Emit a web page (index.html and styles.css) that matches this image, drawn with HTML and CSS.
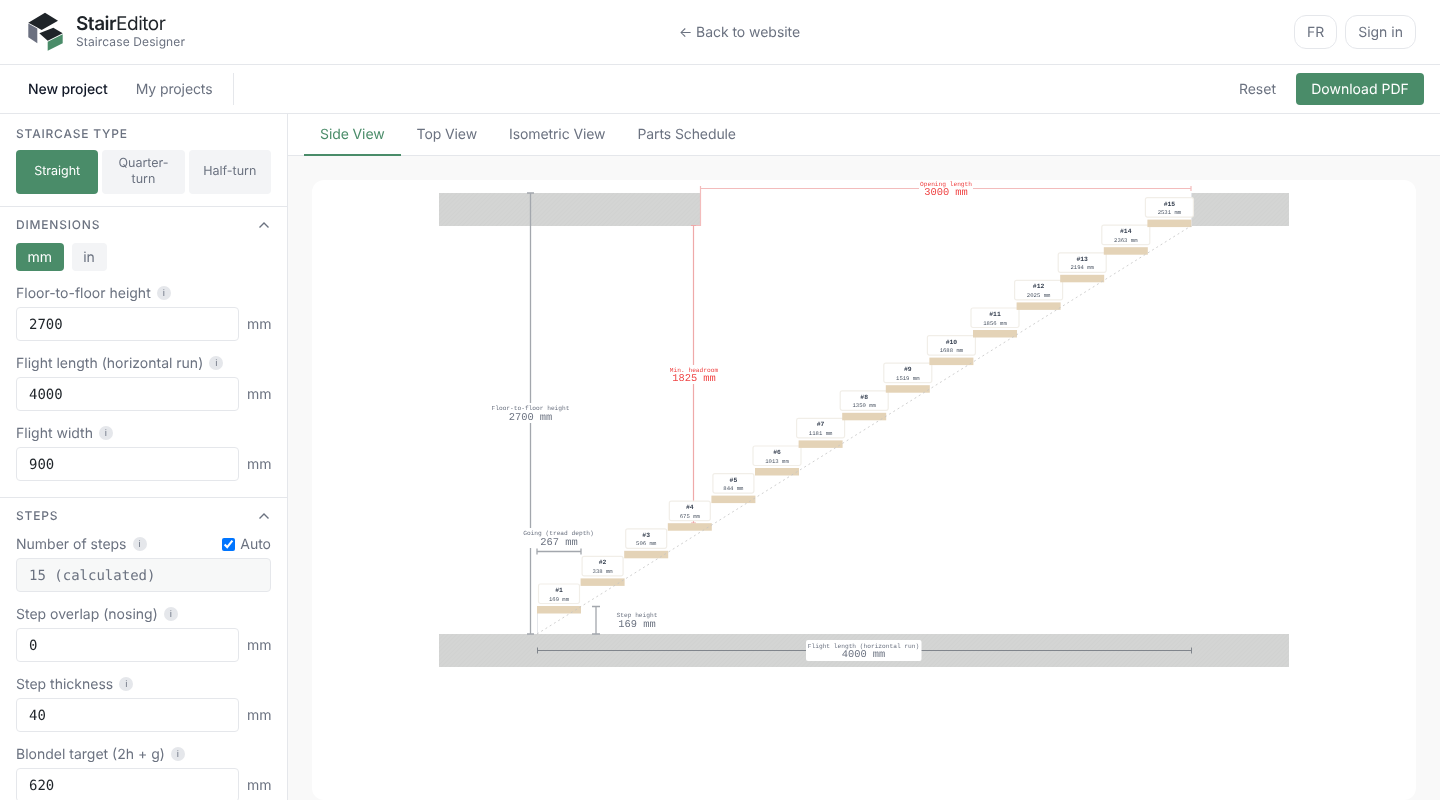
FILE: index.html
```html
<!DOCTYPE html>
<html lang="en">
<head>
    <meta charset="UTF-8">
    <meta name="viewport" content="width=device-width, initial-scale=1.0">
    <title>StairEditor - Staircase Designer</title>
    <link rel="stylesheet" href="styles.css">
</head>
<body>

    <header class="topbar">
        <div class="brand">
            <svg class="brand-logo" viewBox="0 0 40 40" width="40" height="40">
                <polygon points="4.3,10.7 21,0.7 34,8.7 17.7,18 13.3,15.5" fill="#1f2429"/>
                <polygon points="4.3,11.5 13.3,16.5 13.3,31.3 4.3,25.3" fill="#6b7080"/>
                <polygon points="15.3,21.3 29.3,15.7 38.7,21.3 23.7,28.7" fill="#1f2429"/>
                <polygon points="23.7,29.7 38.7,22.3 38.7,31.3 23.7,38.7" fill="#4a8c69"/>
            </svg>
            <div>
                <div class="brand-name"><b>Stair</b>Editor</div>
                <div class="brand-sub">Staircase Designer</div>
            </div>
        </div>
        <a class="back-link">← Back to website</a>
        <div class="topbar-actions">
            <button class="pill-btn">FR</button>
            <button class="pill-btn">Sign in</button>
        </div>
    </header>

    <nav class="projectbar">
        <div class="project-links">
            <a class="project-link active">New project</a>
            <a class="project-link">My projects</a>
        </div>
        <div class="project-actions">
            <a class="reset-link">Reset</a>
            <button class="primary-btn">Download PDF</button>
        </div>
    </nav>

    <div class="workspace">
        <aside class="sidebar">
            <section class="panel panel-type">
                <h3 class="panel-title">Staircase type</h3>
                <div class="type-grid">
                    <button class="type-btn active">Straight</button>
                    <button class="type-btn">Quarter-turn</button>
                    <button class="type-btn">Half-turn</button>
                </div>
            </section>

            <section class="panel">
                <div class="panel-head">
                    <h3 class="panel-title">Dimensions</h3>
                    <svg class="chevron" viewBox="0 0 12 8" width="12" height="8"><path d="M1.5 6.5 6 2l4.5 4.5"/></svg>
                </div>
                <div class="unit-toggle">
                    <button class="unit-btn active">mm</button>
                    <button class="unit-btn">in</button>
                </div>
                <div class="field">
                    <label class="field-label">Floor-to-floor height <span class="info">i</span></label>
                    <div class="field-row"><input type="text" value="2700"><span class="unit">mm</span></div>
                </div>
                <div class="field">
                    <label class="field-label">Flight length (horizontal run) <span class="info">i</span></label>
                    <div class="field-row"><input type="text" value="4000"><span class="unit">mm</span></div>
                </div>
                <div class="field">
                    <label class="field-label">Flight width <span class="info">i</span></label>
                    <div class="field-row"><input type="text" value="900"><span class="unit">mm</span></div>
                </div>
            </section>

            <section class="panel">
                <div class="panel-head">
                    <h3 class="panel-title">Steps</h3>
                    <svg class="chevron" viewBox="0 0 12 8" width="12" height="8"><path d="M1.5 6.5 6 2l4.5 4.5"/></svg>
                </div>
                <div class="field">
                    <div class="label-row">
                        <label class="field-label">Number of steps <span class="info">i</span></label>
                        <label class="auto-check"><input type="checkbox" checked> Auto</label>
                    </div>
                    <div class="field-row"><input type="text" value="15 (calculated)" disabled></div>
                </div>
                <div class="field">
                    <label class="field-label">Step overlap (nosing) <span class="info">i</span></label>
                    <div class="field-row"><input type="text" value="0"><span class="unit">mm</span></div>
                </div>
                <div class="field">
                    <label class="field-label">Step thickness <span class="info">i</span></label>
                    <div class="field-row"><input type="text" value="40"><span class="unit">mm</span></div>
                </div>
                <div class="field">
                    <label class="field-label">Blondel target (2h + g) <span class="info">i</span></label>
                    <div class="field-row"><input type="text" value="620"><span class="unit">mm</span></div>
                </div>
            </section>
        </aside>

        <main class="viewer">
            <div class="tabs">
                <a class="tab active">Side View</a>
                <a class="tab">Top View</a>
                <a class="tab">Isometric View</a>
                <a class="tab">Parts Schedule</a>
            </div>
            <div class="canvas-wrap">
                <div class="canvas-card">
                    <!-- viewBox uses the same numbers as the page so the drawing is easy to check -->
                    <svg class="drawing" viewBox="312 180 1104 620" width="1104" height="620">
                        <defs>
                            <pattern id="hatch" width="3" height="3" patternUnits="userSpaceOnUse" patternTransform="rotate(45)">
                                <rect width="3" height="3" fill="#d4d5d4"/>
                                <line x1="0" y1="0" x2="0" y2="3" stroke="#cfd0cf" stroke-width="1"/>
                            </pattern>
                        </defs>

                        <rect class="slab" x="439" y="193" width="261.5" height="33"/>
                        <rect class="slab" x="1191" y="193" width="98" height="33"/>
                        <rect class="slab" x="439" y="634" width="850" height="33"/>

                        <line class="guide" x1="537.5" y1="613" x2="537.5" y2="634"/>
                        <line class="guide" x1="1191.5" y1="193" x2="1191.5" y2="227"/>

                        <!-- headroom line goes under the step boxes -->
                        <path class="dim-red" d="M693.5 226V523M691 225.5h5M691 523h5"/>

                        <!-- steps -->
                        <g transform="translate(537 606)"><rect class="tread" width="44" height="7.5"/><rect class="step-box" x="1.5" y="-22" width="41" height="19.5" rx="2"/><text class="step-num" x="22" y="-14">#1</text><text class="step-mm" x="22" y="-5.5">169 mm</text></g>
                        <g transform="translate(580.6 578.4)"><rect class="tread" width="44" height="7.5"/><rect class="step-box" x="1.5" y="-22" width="41" height="19.5" rx="2"/><text class="step-num" x="22" y="-14">#2</text><text class="step-mm" x="22" y="-5.5">338 mm</text></g>
                        <g transform="translate(624.2 550.8)"><rect class="tread" width="44" height="7.5"/><rect class="step-box" x="1.5" y="-22" width="41" height="19.5" rx="2"/><text class="step-num" x="22" y="-14">#3</text><text class="step-mm" x="22" y="-5.5">506 mm</text></g>
                        <g transform="translate(667.8 523.2)"><rect class="tread" width="44" height="7.5"/><rect class="step-box" x="1.5" y="-22" width="41" height="19.5" rx="2"/><text class="step-num" x="22" y="-14">#4</text><text class="step-mm" x="22" y="-5.5">675 mm</text></g>
                        <g transform="translate(711.4 495.6)"><rect class="tread" width="44" height="7.5"/><rect class="step-box" x="1.5" y="-22" width="41" height="19.5" rx="2"/><text class="step-num" x="22" y="-14">#5</text><text class="step-mm" x="22" y="-5.5">844 mm</text></g>
                        <g transform="translate(755 468)"><rect class="tread" width="44" height="7.5"/><rect class="step-box" x="-2" y="-22" width="48" height="19.5" rx="2"/><text class="step-num" x="22" y="-14">#6</text><text class="step-mm" x="22" y="-5.5">1013 mm</text></g>
                        <g transform="translate(798.6 440.4)"><rect class="tread" width="44" height="7.5"/><rect class="step-box" x="-2" y="-22" width="48" height="19.5" rx="2"/><text class="step-num" x="22" y="-14">#7</text><text class="step-mm" x="22" y="-5.5">1181 mm</text></g>
                        <g transform="translate(842.2 412.8)"><rect class="tread" width="44" height="7.5"/><rect class="step-box" x="-2" y="-22" width="48" height="19.5" rx="2"/><text class="step-num" x="22" y="-14">#8</text><text class="step-mm" x="22" y="-5.5">1350 mm</text></g>
                        <g transform="translate(885.8 385.2)"><rect class="tread" width="44" height="7.5"/><rect class="step-box" x="-2" y="-22" width="48" height="19.5" rx="2"/><text class="step-num" x="22" y="-14">#9</text><text class="step-mm" x="22" y="-5.5">1519 mm</text></g>
                        <g transform="translate(929.4 357.6)"><rect class="tread" width="44" height="7.5"/><rect class="step-box" x="-2" y="-22" width="48" height="19.5" rx="2"/><text class="step-num" x="22" y="-14">#10</text><text class="step-mm" x="22" y="-5.5">1688 mm</text></g>
                        <g transform="translate(973 330)"><rect class="tread" width="44" height="7.5"/><rect class="step-box" x="-2" y="-22" width="48" height="19.5" rx="2"/><text class="step-num" x="22" y="-14">#11</text><text class="step-mm" x="22" y="-5.5">1856 mm</text></g>
                        <g transform="translate(1016.6 302.4)"><rect class="tread" width="44" height="7.5"/><rect class="step-box" x="-2" y="-22" width="48" height="19.5" rx="2"/><text class="step-num" x="22" y="-14">#12</text><text class="step-mm" x="22" y="-5.5">2025 mm</text></g>
                        <g transform="translate(1060.2 274.8)"><rect class="tread" width="44" height="7.5"/><rect class="step-box" x="-2" y="-22" width="48" height="19.5" rx="2"/><text class="step-num" x="22" y="-14">#13</text><text class="step-mm" x="22" y="-5.5">2194 mm</text></g>
                        <g transform="translate(1103.8 247.2)"><rect class="tread" width="44" height="7.5"/><rect class="step-box" x="-2" y="-22" width="48" height="19.5" rx="2"/><text class="step-num" x="22" y="-14">#14</text><text class="step-mm" x="22" y="-5.5">2363 mm</text></g>
                        <g transform="translate(1147.4 219.6)"><rect class="tread" width="44" height="7.5"/><rect class="step-box" x="-2" y="-22" width="48" height="19.5" rx="2"/><text class="step-num" x="22" y="-14">#15</text><text class="step-mm" x="22" y="-5.5">2531 mm</text></g>

                        <line class="pitch" x1="537" y1="634" x2="1191" y2="226"/>

                        <!-- floor height -->
                        <path class="dim" d="M530.5 193V634M527 193h7M527 634h7"/>
                        <rect class="dim-bg" x="488" y="403" width="85" height="20"/>
                        <text class="dim-label" x="530.5" y="410">Floor-to-floor height</text>
                        <text class="dim-value" x="530.5" y="419.5">2700 mm</text>

                        <!-- going -->
                        <rect class="dim-bg" x="522" y="528" width="74" height="20"/>
                        <text class="dim-label" x="558.5" y="535">Going (tread depth)</text>
                        <text class="dim-value" x="559" y="544.5">267 mm</text>
                        <path class="dim" d="M537 551.5H581M537 548.5v6M581 548.5v6"/>

                        <!-- step height -->
                        <path class="dim" d="M596 606.5V634M592 606.5h8M592 634h8"/>
                        <text class="dim-label" x="637" y="617">Step height</text>
                        <text class="dim-value" x="637" y="626.5">169 mm</text>

                        <!-- flight length -->
                        <path class="dim dim-dark" d="M537 650.5H1191M537.5 647.5v6M1191.5 647.5v6"/>
                        <rect class="dim-bg" x="806" y="640" width="115.5" height="21" rx="2"/>
                        <text class="dim-label" x="863.5" y="647.5">Flight length (horizontal run)</text>
                        <text class="dim-value" x="863.5" y="657">4000 mm</text>

                        <!-- opening -->
                        <path class="dim-red dim-pale" d="M700.5 188.5H1191M700.5 186v5M1191 186v5M700.5 188.5V225.5H696"/>
                        <rect class="dim-bg" x="919" y="181" width="54" height="17"/>
                        <text class="dim-label red" x="946" y="185.5">Opening length</text>
                        <text class="dim-value red" x="946" y="195">3000 mm</text>

                        <!-- headroom label -->
                        <rect class="dim-bg" x="668" y="365" width="52" height="19"/>
                        <text class="dim-label red" x="694" y="371.5">Min. headroom</text>
                        <text class="dim-value red" x="694" y="380.5">1825 mm</text>
                    </svg>
                </div>
            </div>
        </main>
    </div>

</body>
</html>
```

FILE: styles.css
```css
* {
    box-sizing: border-box;
}
html, body {
    height: 100%;
}
body {
    margin: 0;
    height: 100vh;
    overflow: hidden;
    display: flex;
    flex-direction: column;
    font-family: Inter, "Liberation Sans", sans-serif;
    font-size: 14px;
    color: #6b7280;
    background: #fff;
    text-rendering: geometricPrecision;
}
body > * {
    will-change: transform;
}
button {
    font-family: inherit;
    cursor: pointer;
    text-rendering: geometricPrecision;
}

/* top bar */
.topbar {
    flex: none;
    height: 65px;
    padding: 0 24px;
    display: flex;
    align-items: center;
    justify-content: space-between;
    border-bottom: 1px solid #e5e7eb;
}
.brand {
    display: flex;
    align-items: center;
    gap: 12px;
}
.brand-logo {
    display: block;
}
.brand-name {
    font-size: 19px;
    line-height: 22px;
    letter-spacing: -0.5px;
    color: #1f2429;
}
.brand-name b {
    font-weight: 600;
}
.brand-sub {
    font-size: 12px;
    line-height: 14px;
    letter-spacing: 0.12px;
    color: #6b7280;
    margin-bottom: 2px;
}
.back-link {
    color: #6b7280;
    letter-spacing: -0.05px;
}
.topbar-actions {
    display: flex;
    gap: 8px;
}
.pill-btn {
    height: 34px;
    padding: 0 12px;
    font-size: 14px;
    color: #6b7280;
    background: #fff;
    border: 1px solid #e5e7eb;
    border-radius: 12px;
}

/* project bar */
.projectbar {
    flex: none;
    height: 49px;
    padding: 0 16px 0 28px;
    display: flex;
    align-items: center;
    justify-content: space-between;
    border-bottom: 1px solid #e5e7eb;
}
.project-links {
    height: 32px;
    padding-right: 20px;
    display: flex;
    align-items: center;
    gap: 28px;
    letter-spacing: -0.1px;
    border-right: 1px solid #e5e7eb;
}
.project-link.active {
    color: #111827;
    font-weight: 500;
}
.project-actions {
    display: flex;
    align-items: center;
    gap: 20px;
}
.primary-btn {
    width: 128px;
    height: 32px;
    font-size: 14px;
    color: #fff;
    background: #4a8c69;
    border: none;
    border-radius: 4px;
}

/* layout */
.workspace {
    flex: 1;
    min-height: 0;
    display: flex;
}
.sidebar {
    flex: none;
    width: 288px;
    overflow: hidden;
    border-right: 1px solid #e5e7eb;
}
.panel {
    padding: 0 16px 16px;
    border-bottom: 1px solid #e5e7eb;
}
.panel-type {
    padding: 13px 16px 12px;
}
.panel-title {
    margin: 0;
    font-size: 12px;
    line-height: 14px;
    font-weight: 500;
    letter-spacing: 0.8px;
    text-transform: uppercase;
    color: #6b7280;
}
.panel-head {
    height: 36px;
    display: flex;
    align-items: center;
    justify-content: space-between;
}
.chevron {
    fill: none;
    stroke: #6b7280;
    stroke-width: 1.4;
    margin-right: 1px;
}
.type-grid {
    margin-top: 9px;
    display: grid;
    grid-template-columns: repeat(3, 1fr);
    gap: 4px;
}
.type-btn {
    height: 44px;
    padding: 0 8px;
    font-size: 12.5px;
    line-height: 16px;
    color: #6b7280;
    background: #f3f4f6;
    border: none;
    border-radius: 4px;
}
.type-btn.active, .unit-btn.active {
    color: #fff;
    background: #4a8c69;
}
.unit-toggle {
    display: flex;
    gap: 8px;
    margin-bottom: 12px;
}
.unit-btn {
    height: 28px;
    min-width: 35px;
    padding: 0 11.5px;
    font-size: 14px;
    color: #6b7280;
    background: #f3f4f6;
    border: none;
    border-radius: 4px;
}
.field + .field {
    margin-top: 12px;
}
.field-label {
    display: flex;
    align-items: center;
    gap: 6px;
    height: 20px;
    margin-bottom: 4px;
    color: #6b7280;
}
.label-row {
    display: flex;
    justify-content: space-between;
}
.auto-check {
    display: flex;
    align-items: center;
    gap: 5px;
    height: 20px;
}
.auto-check input {
    width: 13px;
    height: 13px;
    margin: 0;
}
.info {
    width: 14px;
    height: 14px;
    display: inline-flex;
    align-items: center;
    justify-content: center;
    font-size: 9px;
    color: #6b7280;
    background: #e5e7eb;
    border-radius: 50%;
}
.field-row {
    display: flex;
    align-items: center;
    gap: 8px;
}
.field-row input {
    flex: 1;
    min-width: 0;
    height: 34px;
    padding: 2px 12px 0;
    font-family: "DejaVu Sans Mono", monospace;
    font-size: 14px;
    color: #1f2429;
    background: #fff;
    border: 1px solid #e5e7eb;
    border-radius: 4px;
    text-rendering: geometricPrecision;
}
.field-row input:disabled {
    color: #6b7280;
    background: #f7f8f8;
}
.unit {
    width: 24px;
}

/* viewer */
.viewer {
    flex: 1;
    min-width: 0;
    display: flex;
    flex-direction: column;
    background: #f9f9f9;
}
.tabs {
    flex: none;
    height: 42px;
    padding-left: 16px;
    display: flex;
    background: #fff;
    border-bottom: 1px solid #e5e7eb;
}
.tab {
    height: 42px;
    padding: 0 16px 2px;
    display: flex;
    align-items: center;
    letter-spacing: -0.1px;
}
.tab.active {
    color: #4a8c69;
    padding-bottom: 0;
    border-bottom: 2px solid #4a8c69;
}
.canvas-wrap {
    flex: 1;
    min-height: 0;
    padding: 24px 24px 0;
    overflow: hidden;
}
.canvas-card {
    background: #fff;
    border-radius: 12px;
    height: 100%;
}
.drawing {
    display: block;
}

/* drawing parts */
.slab {
    fill: url(#hatch);
}
.guide {
    stroke: #e5e7eb;
    stroke-width: 1;
}
.pitch {
    stroke: #c4c4c4;
    stroke-width: 0.8;
    stroke-dasharray: 2 3;
}
.tread {
    fill: #e4d3b7;
}
.step-box {
    fill: #fff;
    stroke: #f1eee8;
    stroke-width: 1.2;
}
.step-num, .step-mm, .dim-label, .dim-value {
    font-family: "Liberation Mono", monospace;
    text-anchor: middle;
}
.step-num {
    font-size: 6.4px;
    font-weight: 700;
    fill: #374151;
}
.step-mm {
    font-size: 5.6px;
    fill: #4b5563;
}
.dim {
    fill: none;
    stroke: #a3a7ad;
    stroke-width: 1.3;
}
.dim-dark {
    stroke: #80858c;
    stroke-width: 1;
}
.dim-red {
    fill: none;
    stroke: #efa9a9;
    stroke-width: 1.2;
}
.dim-pale {
    stroke: #f3bcbc;
}
.dim-bg {
    fill: #fff;
}
.dim-label {
    font-size: 6.2px;
    fill: #6b7280;
}
.dim-value {
    font-size: 10.4px;
    fill: #6b7280;
}
.dim-label.red, .dim-value.red {
    fill: #ef4444;
}
```
